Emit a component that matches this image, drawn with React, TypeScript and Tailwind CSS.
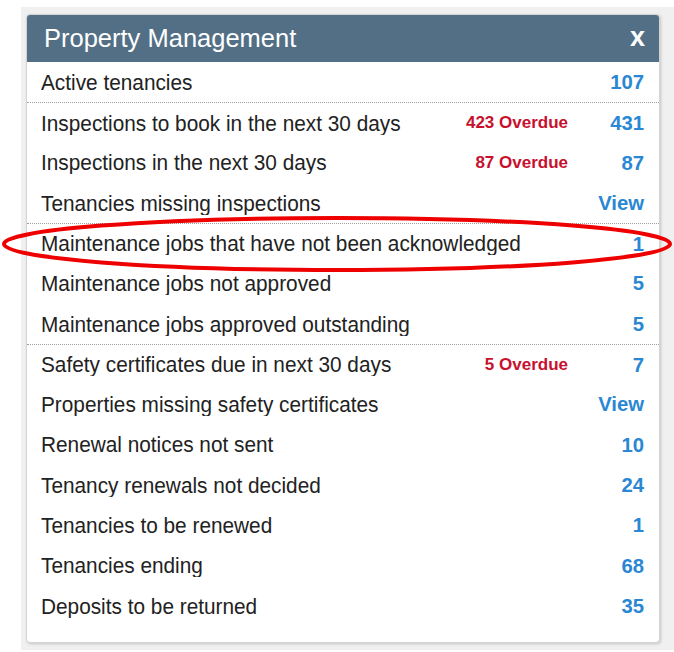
import React from 'react';

type Row = { label: string; value: string; overdue?: string; section?: boolean };

const rows: Row[] = [
  { label: 'Active tenancies', value: '107' },
  { label: 'Inspections to book in the next 30 days', value: '431', overdue: '423 Overdue', section: true },
  { label: 'Inspections in the next 30 days', value: '87', overdue: '87 Overdue' },
  { label: 'Tenancies missing inspections', value: 'View' },
  { label: 'Maintenance jobs that have not been acknowledged', value: '1', section: true },
  { label: 'Maintenance jobs not approved', value: '5' },
  { label: 'Maintenance jobs approved outstanding', value: '5' },
  { label: 'Safety certificates due in next 30 days', value: '7', overdue: '5 Overdue', section: true },
  { label: 'Properties missing safety certificates', value: 'View' },
  { label: 'Renewal notices not sent', value: '10' },
  { label: 'Tenancy renewals not decided', value: '24' },
  { label: 'Tenancies to be renewed', value: '1' },
  { label: 'Tenancies ending', value: '68' },
  { label: 'Deposits to be returned', value: '35' },
];

export default function App() {
  return (
    <div className="relative w-[674px] h-[652px] bg-white pl-[21px] pt-[7px] overflow-hidden font-['Liberation_Sans',Arial,sans-serif]">
      <div className="h-[643px] bg-[#f0f0f0] pl-[5px] pt-[7px]">
        {/* Widget card */}
        <div className="w-[634px] h-[629px] bg-white rounded-[4px] border border-[#d4d4d4] shadow-[1px_1px_3px_rgba(0,0,0,0.18)] overflow-hidden">
          <div className="h-[47px] bg-[#536f86] flex items-center justify-between pl-[17px] pr-[14px] text-white">
            <span className="text-[25.5px] leading-none">Property Management</span>
            <span className="text-[27px] font-bold leading-none -mt-[2px]">x</span>
          </div>
          <div>
            {rows.map((r) => (
              <div
                key={r.label}
                className={`h-[40.3px] flex items-center pl-[14px] pr-[15px] text-[#222222] ${r.section ? 'border-t border-dotted border-[#a0a0a0]' : ''}`}
              >
                <div className="flex-1 flex items-center">
                  <span className="inline-block text-[20.8px] leading-none scale-y-[1.08]">{r.label}</span>
                </div>
                {r.overdue && (
                  <span className="text-[17px] font-bold text-[#c8102e] leading-none">{r.overdue}</span>
                )}
                <span className="w-[76px] text-right text-[20.3px] font-bold text-[#2a87d3] leading-none">{r.value}</span>
              </div>
            ))}
          </div>
        </div>
      </div>
      {/* Red highlight ring */}
      <svg className="absolute left-0 top-0 pointer-events-none" width="674" height="652">
        <ellipse cx="337" cy="244" rx="333" ry="26" fill="none" stroke="#ee0000" strokeWidth="4" />
      </svg>
    </div>
  );
}
